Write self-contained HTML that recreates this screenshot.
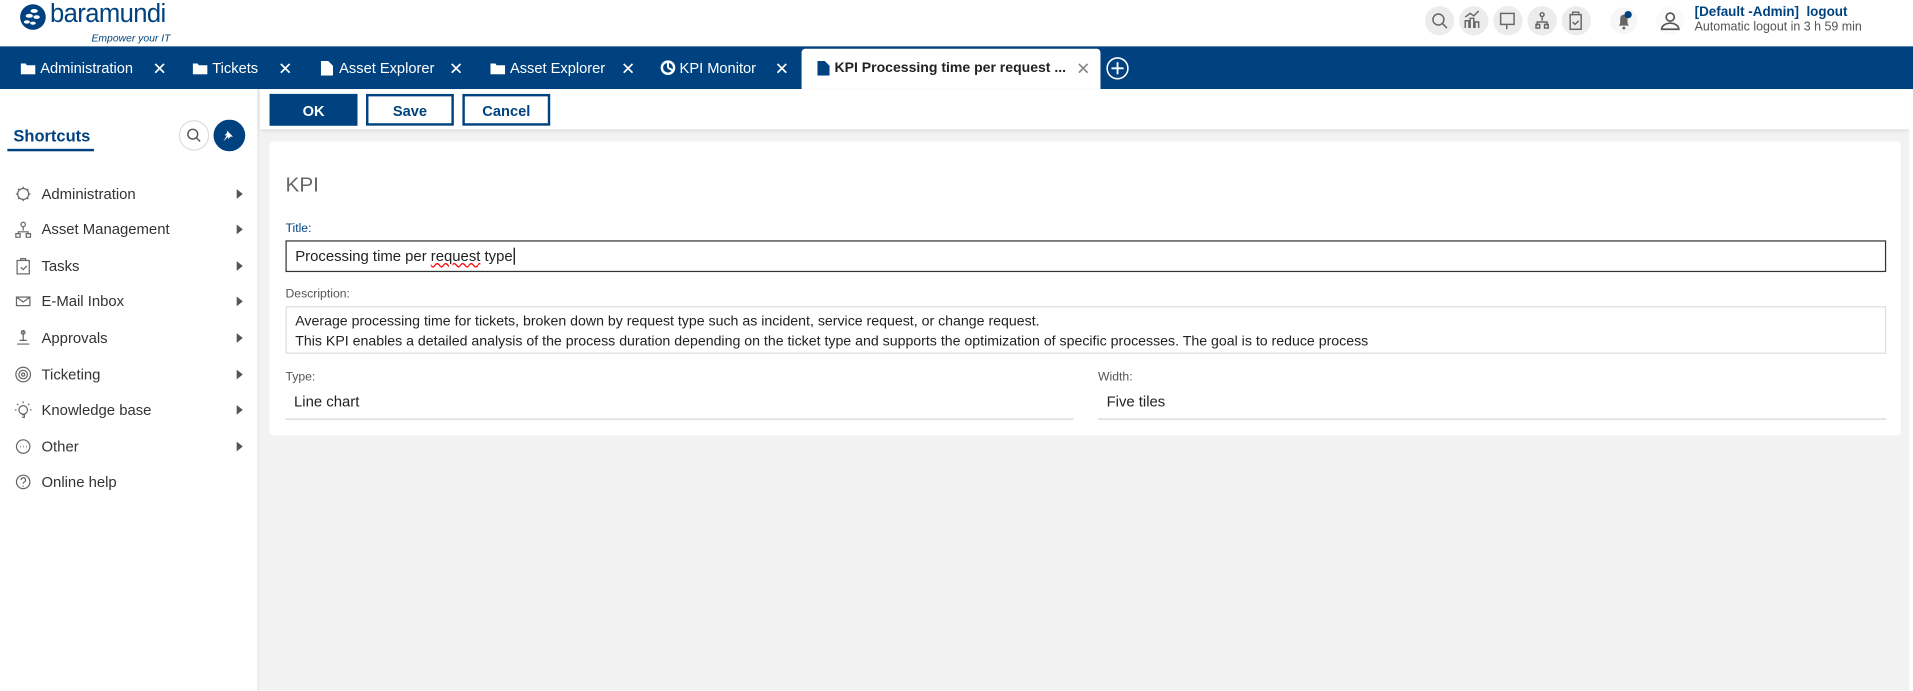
<!DOCTYPE html>
<html><head><meta charset="utf-8"><style>
*{box-sizing:border-box;margin:0;padding:0}
html,body{width:1913px;height:690px;overflow:hidden;background:#fff}
#w{position:absolute;left:0;top:0;width:1568px;height:566px;transform:scale(1.22003);transform-origin:0 0;font-family:"Liberation Sans",sans-serif;background:#f2f2f2}
.a{position:absolute}
.blue{color:#00427f}
.tab{position:absolute;top:0;height:35px;line-height:36px;color:#fff;font-size:12px;white-space:nowrap}
.x{position:absolute;top:0;color:#fff;font-size:14px;line-height:36px}
.mi{position:absolute;left:0;width:212px;height:20px;font-size:12.2px;color:#333;line-height:20px}
.mi span{position:absolute;left:34px}
.mi i{position:absolute;left:194px;top:6px;width:0;height:0;border-left:5px solid #555;border-top:4px solid transparent;border-bottom:4px solid transparent}
.mi svg{position:absolute;left:12px;top:3px}
.ic{position:absolute;top:5px;width:24px;height:24px;border-radius:50%;background:#ececec}
.lbl{position:absolute;font-size:10px;color:#555}
.btn{position:absolute;top:77px;height:26px;font-size:12px;font-weight:bold;text-align:center;line-height:24px;border:2px solid #00427f;color:#00427f;background:#fff}
</style></head><body><div id="w">
<div class="a" style="left:0;top:0;width:1568px;height:38px;background:#fff"></div>
<svg class="a" style="left:16px;top:3px" width="22" height="22" viewBox="0 0 22 22"><circle cx="11" cy="11" r="10.5" fill="#00427f"/><g fill="#fff"><ellipse cx="12" cy="6" rx="3" ry="1.6"/><ellipse cx="8" cy="10" rx="3" ry="1.6"/><ellipse cx="14" cy="11" rx="2.6" ry="1.5"/><ellipse cx="6" cy="15" rx="2.5" ry="1.4"/><ellipse cx="11" cy="16" rx="2.3" ry="1.3"/></g></svg>
<div class="a blue" style="left:41px;top:0px;font-size:21px;letter-spacing:-0.5px">baramundi</div>
<div class="a blue" style="left:75px;top:26px;font-size:8.5px;font-style:italic">Empower your IT</div>
<div class="ic" style="left:1168px"></div><div class="ic" style="left:1196px"></div><div class="ic" style="left:1224px"></div><div class="ic" style="left:1252px"></div><div class="ic" style="left:1280px"></div>
<svg class="a" style="left:1168px;top:5px" width="140" height="24" viewBox="0 0 140 24" fill="none" stroke="#666" stroke-width="1.2"><circle cx="11" cy="11" r="4.5"/><path d="M14 14l4 4"/><path d="M33 18v-6h3v6M37 18v-8h3v8M41 18v-5h3v5M33 9l4-3 3 2 4-4"/><rect x="62" y="6" width="11" height="9"/><path d="M67 15v4"/><circle cx="96" cy="7" r="1.6"/><path d="M96 9v3M92 16v-3h8v3"/><rect x="91" y="15" width="3" height="3"/><rect x="98" y="15" width="3" height="3"/><rect x="119" y="7" width="9" height="12"/><path d="M121 7v-2h5v2M121 13l2 2 3-3"/></svg>
<svg class="a" style="left:1320px;top:5px" width="22" height="24" viewBox="0 0 22 24"><circle cx="11" cy="12" r="11" fill="#f6f6f6"/><path d="M7 16h8l-1-2v-4a3 3 0 0 0-6 0v4z" fill="#666"/><circle cx="11" cy="18" r="1.2" fill="#666"/><circle cx="14.5" cy="7" r="3" fill="#00427f"/></svg>
<svg class="a" style="left:1357px;top:5px" width="24" height="24" viewBox="0 0 24 24"><circle cx="12" cy="12" r="11.5" fill="#fafafa"/><circle cx="12" cy="9" r="3.3" fill="none" stroke="#555" stroke-width="1.4"/><path d="M5 19a7 5 0 0 1 14 0z" fill="none" stroke="#555" stroke-width="1.4"/></svg>
<div class="a blue" style="left:1389px;top:4px;font-size:11px;font-weight:bold">[Default -Admin]&nbsp; logout</div>
<div class="a" style="left:1389px;top:17px;font-size:10.2px;color:#555">Automatic logout in 3 h 59 min</div>
<div class="a" style="left:0;top:38px;width:1568px;height:35px;background:#00427f"></div>
<div class="a" style="left:0;top:38px;width:1568px;height:35px">
<svg class="a" style="left:17px;top:13px" width="12" height="10"><path d="M0 1h4l1 1.5h7V10H0z" fill="#fff"/></svg><div class="tab" style="left:33px">Administration</div><div class="x" style="left:125px">✕</div>
<svg class="a" style="left:158px;top:13px" width="12" height="10"><path d="M0 1h4l1 1.5h7V10H0z" fill="#fff"/></svg><div class="tab" style="left:174px">Tickets</div><div class="x" style="left:228px">✕</div>
<svg class="a" style="left:263px;top:12px" width="10" height="12"><path d="M0 0h6l4 4v8H0z" fill="#fff"/></svg><div class="tab" style="left:278px">Asset Explorer</div><div class="x" style="left:368px">✕</div>
<svg class="a" style="left:402px;top:13px" width="12" height="10"><path d="M0 1h4l1 1.5h7V10H0z" fill="#fff"/></svg><div class="tab" style="left:418px">Asset Explorer</div><div class="x" style="left:509px">✕</div>
<svg class="a" style="left:541px;top:11px" width="13" height="13"><circle cx="6.5" cy="6.5" r="5" fill="none" stroke="#fff" stroke-width="2"/><path d="M6.5 6.5V1M6.5 6.5L11 9" stroke="#fff" stroke-width="1.6"/></svg><div class="tab" style="left:557px">KPI Monitor</div><div class="x" style="left:635px">✕</div>
<div class="a" style="left:657px;top:2px;width:245px;height:33px;background:#fff;border-radius:3px 3px 0 0"></div>
<svg class="a" style="left:670px;top:12px" width="10" height="12"><path d="M0 0h6l4 4v8H0z" fill="#00427f"/></svg><div class="tab" style="left:684px;color:#222;font-weight:bold;font-size:11.5px">KPI Processing time per request ...</div><div class="x" style="left:882px;color:#888">✕</div>
<svg class="a" style="left:906px;top:8px" width="20" height="20"><circle cx="10" cy="10" r="8.5" fill="none" stroke="#fff" stroke-width="1.3"/><path d="M10 5v10M5 10h10" stroke="#fff" stroke-width="1.5"/></svg>
</div>
<div class="a" style="left:0;top:73px;width:212px;height:493px;background:#fff;border-right:1px solid #e2e2e2"></div>
<div class="a blue" style="left:11px;top:104px;font-size:13.5px;font-weight:bold">Shortcuts</div>
<div class="a" style="left:6px;top:122px;width:71px;height:2px;background:#00427f"></div>
<svg class="a" style="left:146px;top:98px" width="58" height="27"><circle cx="13" cy="13" r="12" fill="#fff" stroke="#ddd"/><circle cx="12" cy="12" r="4" fill="none" stroke="#555" stroke-width="1.2"/><path d="M15 15l3 3" stroke="#555" stroke-width="1.2"/><circle cx="42" cy="13" r="13" fill="#00427f"/><path d="M40 9l5 5-2 0-2 2v-2l-4 4 3-5h-2l2-2z" fill="#fff"/></svg>
<div class="mi" style="top:149px"><svg width="14" height="14" fill="none" stroke="#666"><circle cx="7" cy="7" r="4.5"/><path d="M7 1v1.5M7 11.5V13M1 7h1.5M11.5 7H13M2.8 2.8l1 1M10.2 10.2l1 1M11.2 2.8l-1 1M3.8 10.2l-1 1"/></svg><span>Administration</span><i></i></div>
<div class="mi" style="top:178px"><svg width="14" height="14" fill="none" stroke="#666"><circle cx="7" cy="3" r="1.8"/><path d="M7 5v3M3 11V9h8v2"/><rect x="1" y="10.5" width="3.5" height="3"/><rect x="9.5" y="10.5" width="3.5" height="3"/></svg><span>Asset Management</span><i></i></div>
<div class="mi" style="top:208px"><svg width="14" height="14" fill="none" stroke="#666"><rect x="2" y="2.5" width="10" height="11"/><path d="M5 2.5v-1.5h4v1.5M5 8l2 2 3-3"/></svg><span>Tasks</span><i></i></div>
<div class="mi" style="top:237px"><svg width="14" height="14" fill="none" stroke="#666"><rect x="1.5" y="3.5" width="11" height="7"/><path d="M1.5 3.5l5.5 4 5.5-4"/></svg><span>E-Mail Inbox</span><i></i></div>
<div class="mi" style="top:267px"><svg width="14" height="14" fill="none" stroke="#666"><path d="M7 1v8M4 9h6M2 12h10"/><circle cx="7" cy="2.5" r="1.5"/></svg><span>Approvals</span><i></i></div>
<div class="mi" style="top:297px"><svg width="14" height="14" fill="none" stroke="#666"><circle cx="7" cy="7" r="6"/><circle cx="7" cy="7" r="3.5"/><circle cx="7" cy="7" r="1.3"/></svg><span>Ticketing</span><i></i></div>
<div class="mi" style="top:326px"><svg width="14" height="14" fill="none" stroke="#666"><circle cx="7" cy="7" r="3.5"/><path d="M6 11h2v2H6M0 7h1.5M12.5 7H14M7 0v1.5M2 2l1 1M12 2l-1 1"/></svg><span>Knowledge base</span><i></i></div>
<div class="mi" style="top:356px"><svg width="14" height="14" fill="none" stroke="#666"><circle cx="7" cy="7" r="5.5"/><path d="M4.5 7h.5M7 7h.5M9.5 7h.5" stroke-width="1.5"/></svg><span>Other</span><i></i></div>
<div class="mi" style="top:385px"><svg width="14" height="14" fill="none" stroke="#666"><circle cx="7" cy="7" r="5.5"/><path d="M5.3 5.5a1.8 1.8 0 1 1 2.5 1.6c-.6.3-.8.7-.8 1.4M7 10v1"/></svg><span>Online help</span></div>
<div class="a" style="left:213px;top:73px;width:1352px;height:33px;background:#fff;box-shadow:0 1px 3px rgba(0,0,0,.1)"></div>
<div class="btn" style="left:221px;width:72px;background:#00427f;color:#fff">OK</div>
<div class="btn" style="left:300px;width:72px">Save</div>
<div class="btn" style="left:379px;width:72px">Cancel</div>
<div class="a" style="left:1565px;top:73px;width:3px;height:493px;background:#fff"></div>
<div class="a" style="left:221px;top:116px;width:1337px;height:241px;background:#fff;border-radius:3px"></div>
<div class="a" style="left:234px;top:142px;font-size:17px;color:#666">KPI</div>
<div class="lbl" style="left:234px;top:182px;color:#00427f">Title:</div>
<div class="a" style="left:234px;top:197px;width:1312px;height:26px;border:1px solid #333;font-size:12.2px;line-height:24px;padding-left:7px;color:#222">Processing time per <span style="text-decoration:underline wavy red;text-decoration-thickness:1px">request</span> type<span style="border-left:1px solid #000;margin-left:1px"></span></div>
<div class="lbl" style="left:234px;top:236px">Description:</div>
<div class="a" style="left:234px;top:251px;width:1312px;height:39px;border:1px solid #ddd;font-size:11.6px;line-height:16px;padding:4px 7px;color:#222;white-space:nowrap;overflow:hidden">Average processing time for tickets, broken down by request type such as incident, service request, or change request.<br>This KPI enables a detailed analysis of the process duration depending on the ticket type and supports the optimization of specific processes. The goal is to reduce process</div>
<div class="lbl" style="left:234px;top:304px">Type:</div>
<div class="lbl" style="left:900px;top:304px">Width:</div>
<div class="a" style="left:241px;top:322px;font-size:12.2px;color:#222">Line chart</div>
<div class="a" style="left:907px;top:322px;font-size:12.2px;color:#222">Five tiles</div>
<div class="a" style="left:234px;top:343px;width:646px;height:1px;background:#d6d6d6"></div>
<div class="a" style="left:900px;top:343px;width:646px;height:1px;background:#d6d6d6"></div>
</div></body></html>
